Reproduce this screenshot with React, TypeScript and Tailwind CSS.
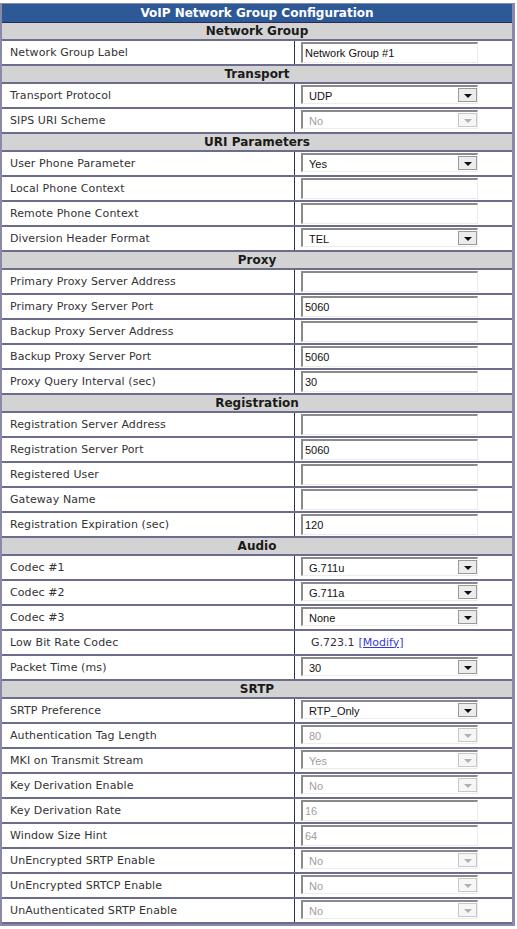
import React from "react";

type Row =
  | { label: string; type: "input"; value: string; disabled?: boolean }
  | { label: string; type: "select"; value: string; disabled?: boolean }
  | { label: string; type: "text" };

const sections: { title: string; rows: Row[] }[] = [
  { title: "Network Group", rows: [{ label: "Network Group Label", type: "input", value: "Network Group #1" }] },
  {
    title: "Transport",
    rows: [
      { label: "Transport Protocol", type: "select", value: "UDP" },
      { label: "SIPS URI Scheme", type: "select", value: "No", disabled: true },
    ],
  },
  {
    title: "URI Parameters",
    rows: [
      { label: "User Phone Parameter", type: "select", value: "Yes" },
      { label: "Local Phone Context", type: "input", value: "" },
      { label: "Remote Phone Context", type: "input", value: "" },
      { label: "Diversion Header Format", type: "select", value: "TEL" },
    ],
  },
  {
    title: "Proxy",
    rows: [
      { label: "Primary Proxy Server Address", type: "input", value: "" },
      { label: "Primary Proxy Server Port", type: "input", value: "5060" },
      { label: "Backup Proxy Server Address", type: "input", value: "" },
      { label: "Backup Proxy Server Port", type: "input", value: "5060" },
      { label: "Proxy Query Interval (sec)", type: "input", value: "30" },
    ],
  },
  {
    title: "Registration",
    rows: [
      { label: "Registration Server Address", type: "input", value: "" },
      { label: "Registration Server Port", type: "input", value: "5060" },
      { label: "Registered User", type: "input", value: "" },
      { label: "Gateway Name", type: "input", value: "" },
      { label: "Registration Expiration (sec)", type: "input", value: "120" },
    ],
  },
  {
    title: "Audio",
    rows: [
      { label: "Codec #1", type: "select", value: "G.711u" },
      { label: "Codec #2", type: "select", value: "G.711a" },
      { label: "Codec #3", type: "select", value: "None" },
      { label: "Low Bit Rate Codec", type: "text" },
      { label: "Packet Time (ms)", type: "select", value: "30" },
    ],
  },
  {
    title: "SRTP",
    rows: [
      { label: "SRTP Preference", type: "select", value: "RTP_Only" },
      { label: "Authentication Tag Length", type: "select", value: "80", disabled: true },
      { label: "MKI on Transmit Stream", type: "select", value: "Yes", disabled: true },
      { label: "Key Derivation Enable", type: "select", value: "No", disabled: true },
      { label: "Key Derivation Rate", type: "input", value: "16", disabled: true },
      { label: "Window Size Hint", type: "input", value: "64", disabled: true },
      { label: "UnEncrypted SRTP Enable", type: "select", value: "No", disabled: true },
      { label: "UnEncrypted SRTCP Enable", type: "select", value: "No", disabled: true },
      { label: "UnAuthenticated SRTP Enable", type: "select", value: "No", disabled: true },
    ],
  },
];

function InputBox({ value, disabled }: { value: string; disabled?: boolean }) {
  return (
    <div
      className={`flex h-[21px] w-[177px] items-center border-t-2 border-l-2 border-r border-b border-t-[#8a8a8a] border-l-[#8a8a8a] border-r-[#ececec] border-b-[#ececec] bg-white pl-[2px] text-[11px] font-['Liberation_Sans',Arial,sans-serif] ${
        disabled ? "text-[#a0a0a0]" : "text-[#111]"
      }`}
    >
      {value}
    </div>
  );
}

function SelectBox({ value, disabled }: { value: string; disabled?: boolean }) {
  return (
    <div className="relative flex h-[19px] w-[177px] items-center border-t-2 border-l-2 border-r border-b border-t-[#8a8a8a] border-l-[#8a8a8a] border-r-[#ececec] border-b-[#ececec] bg-white">
      <span
        className={`pl-[6px] pt-[2px] text-[11px] font-['Liberation_Sans',Arial,sans-serif] ${
          disabled ? "text-[#a0a0a0]" : "text-[#111]"
        }`}
      >
        {value}
      </span>
      <div
        className={`absolute right-0 top-[1px] flex h-[14px] w-[19px] items-end justify-center border pb-[3px] ${
          disabled ? "border-[#c8c8c8] bg-[#f6f6f6]" : "border-[#9a9a9a] bg-[#ececec]"
        }`}
      >
        <svg width="8" height="4" viewBox="0 0 8 4">
          <polygon points="0,0 8,0 4,4" fill={disabled ? "#b0b0b0" : "#111"} />
        </svg>
      </div>
    </div>
  );
}

function DataRow({ row }: { row: Row }) {
  return (
    <div className="flex h-[25px] border-b-2 border-[#6c6c8c]">
      <div className="flex w-[293px] items-center border-r border-[#2e2e5c] pl-[8px] pt-[1px] text-[11px] tracking-[0.1px] text-[#333] font-['DejaVu_Sans',Verdana,sans-serif]">
        {row.label}
      </div>
      <div className="flex flex-1 items-start pl-[6px] pt-[1px]">
        {row.type === "input" && <InputBox value={row.value} disabled={row.disabled} />}
        {row.type === "select" && <SelectBox value={row.value} disabled={row.disabled} />}
        {row.type === "text" && (
          <div className="flex h-[21px] items-center pl-[10px] pt-[1px] text-[11px] text-[#333] font-['DejaVu_Sans',Verdana,sans-serif]">
            G.723.1{" "}
            <a href="#" className="ml-[4px] text-[#3838d8] underline">
              [Modify]
            </a>
          </div>
        )}
      </div>
    </div>
  );
}

export default function App() {
  return (
    <div className="h-[929px] w-[517px] bg-white pt-[3px]">
      <div className="w-[515px] border-t border-l-2 border-r-[3px] border-b-2 border-[#8a8aa8]">
        <div className="flex h-[19px] items-center justify-center border-b border-[#2a2a55] bg-[#2d5a97] text-[12px] font-bold text-white font-['DejaVu_Sans',Verdana,sans-serif]">
          VoIP Network Group Configuration
        </div>
        {sections.map((s) => (
          <div key={s.title}>
            <div className="flex h-[18px] items-center justify-center border-b-2 border-[#6c6c8c] bg-[#d3d3d3] text-[12px] font-bold text-[#1a1a1a] font-['DejaVu_Sans',Verdana,sans-serif]">
              {s.title}
            </div>
            {s.rows.map((r) => (
              <DataRow key={r.label} row={r} />
            ))}
          </div>
        ))}
      </div>
    </div>
  );
}
